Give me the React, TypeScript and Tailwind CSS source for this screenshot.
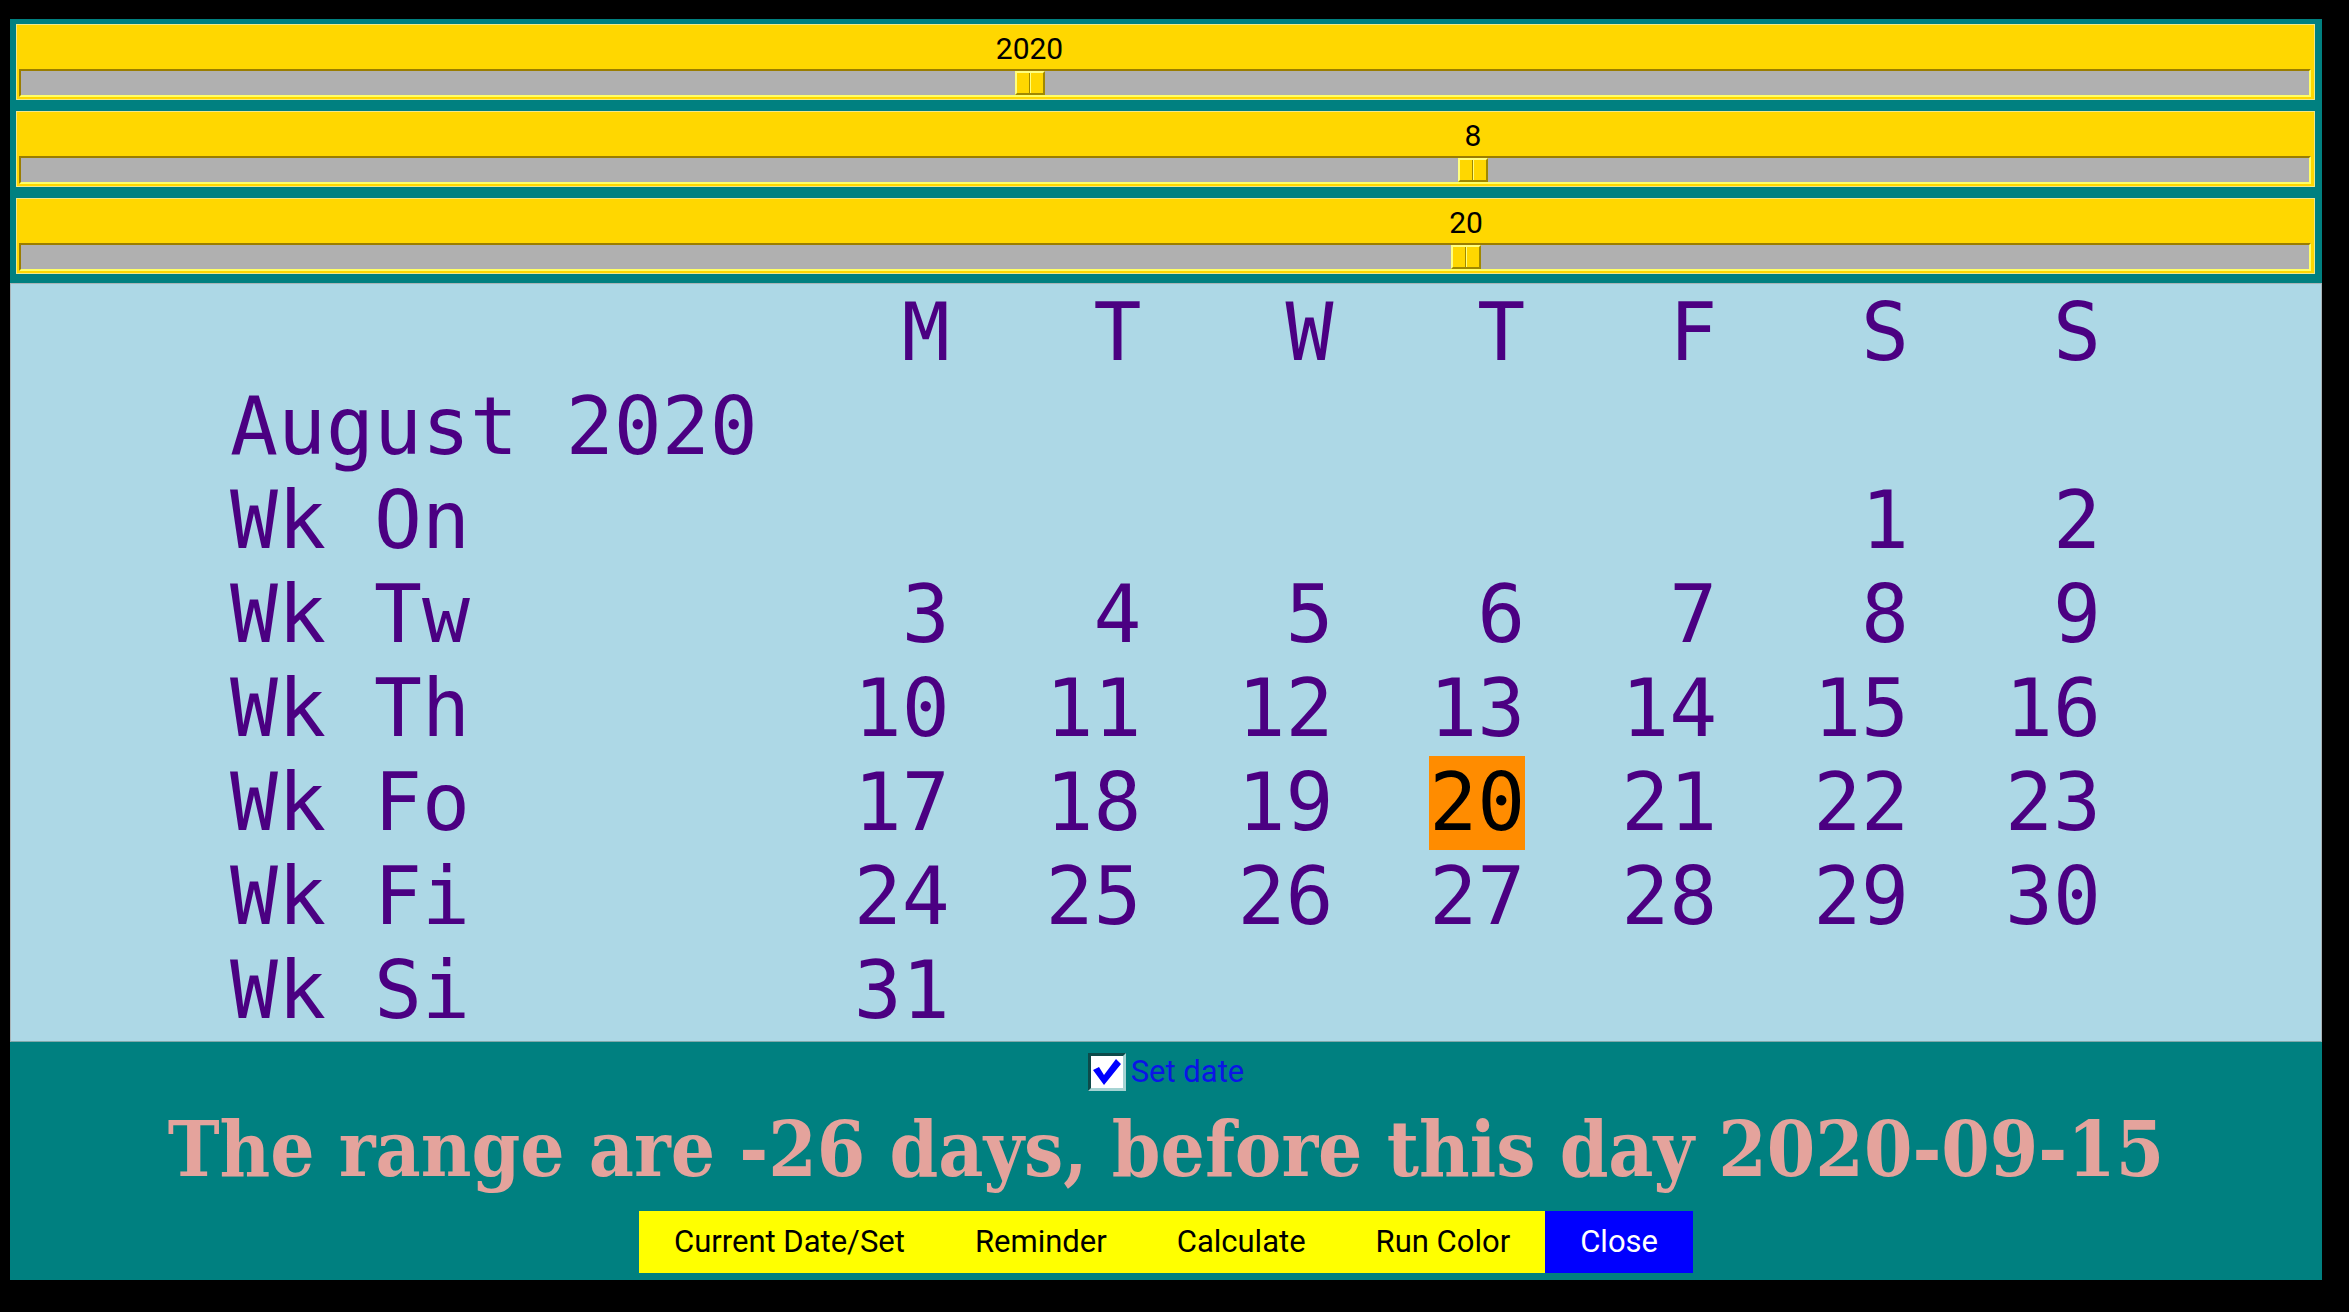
import React from 'react';

type SliderDef = { value: number; min: number; max: number };

const sliders: SliderDef[] = [
  { value: 2020, min: 1800, max: 2300 },
  { value: 8, min: 1, max: 12 },
  { value: 20, min: 1, max: 31 },
];

const days = ['M', 'T', 'W', 'T', 'F', 'S', 'S'];

const weeks: { label: string; cells: (number | null)[] }[] = [
  { label: 'Wk On', cells: [null, null, null, null, null, 1, 2] },
  { label: 'Wk Tw', cells: [3, 4, 5, 6, 7, 8, 9] },
  { label: 'Wk Th', cells: [10, 11, 12, 13, 14, 15, 16] },
  { label: 'Wk Fo', cells: [17, 18, 19, 20, 21, 22, 23] },
  { label: 'Wk Fi', cells: [24, 25, 26, 27, 28, 29, 30] },
  { label: 'Wk Si', cells: [31, null, null, null, null, null, null] },
];

const selectedDay = 20;

const Slider: React.FC<{ s: SliderDef }> = ({ s }) => {
  const f = (s.value - s.min) / (s.max - s.min);
  return (
    <div className="h-[76px] ml-[6px] mr-[7px] border border-[#f2e78a] bg-[#ffd700] flex flex-col">
      <div className="relative h-[44px] ml-[4px] mr-[5px]">
        <span
          className="absolute top-[6px] -translate-x-1/2 font-['Roboto',sans-serif] text-[30px] leading-[35px] text-black"
          style={{ left: `calc(${f} * (100% - 30px) + 15px)` }}
        >
          {s.value}
        </span>
      </div>
      <div className="relative h-[28px] ml-[2px] mr-[3px] border-2 border-t-[#9a7d00] border-l-[#9a7d00] border-b-[#ffff66] border-r-[#ffff66] bg-[#b0b0b0]">
        <div
          className="absolute top-0 w-[30px] h-[24px] flex border-2 border-t-[#ffff80] border-l-[#ffff80] border-b-[#a08800] border-r-[#a08800] bg-[#ffd700]"
          style={{ left: `calc(${f} * (100% - 30px))` }}
        >
          <div className="flex-1 border-r border-[#a08800]" />
          <div className="flex-1 border-l border-[#ffff80]" />
        </div>
      </div>
    </div>
  );
};

const App: React.FC = () => {
  return (
    <div className="w-[2349px] h-[1312px] bg-black pt-[19px] pl-[10px]">
      <div className="w-[2312px] flex flex-col">
        {/* sliders */}
        <div className="bg-[#008080] pt-[5px] pb-[9px] flex flex-col gap-[11px]">
          {sliders.map((s, i) => (
            <Slider key={i} s={s} />
          ))}
        </div>

        {/* calendar */}
        <div className="bg-[#add8e6] border border-[#a9b4b8] border-b-[#80a8aa] pt-[2px] pb-[3px] pl-[219px]">
          <div className="grid grid-cols-[11ch_repeat(7,4ch)] font-['DejaVu_Sans_Mono',monospace] text-[79.7px] leading-[94px] text-[#4b0082] whitespace-pre">
            <div />
            {days.map((d, i) => (
              <div key={i} className="text-right">{d}</div>
            ))}
            <div className="col-span-8">August 2020</div>
            {weeks.map((w) => (
              <React.Fragment key={w.label}>
                <div>{w.label}</div>
                {w.cells.map((c, i) => (
                  <div key={i} className="text-right">
                    {c === null ? '' : c === selectedDay ? (
                      <span className="inline-block bg-[#ff8c00] text-black">{c}</span>
                    ) : (
                      c
                    )}
                  </div>
                ))}
              </React.Fragment>
            ))}
          </div>
        </div>

        {/* result + actions */}
        <div className="bg-[#008080] h-[238px] flex flex-col items-center pt-[11px]">
          <label className="flex items-center gap-[5px] h-[38px]">
            <span className="w-[38px] h-[38px] border-[3px] border-t-[#0d4a4a] border-l-[#0d4a4a] border-b-[#a6d3d3] border-r-[#a6d3d3] bg-white flex items-center justify-center">
              <svg width="30" height="30" viewBox="0 0 30 30">
                <polygon points="1,13 7,10 12,18 24,2 29,7 12,28" fill="#0000ff" />
              </svg>
            </span>
            <span className="font-['Roboto',sans-serif] text-[31px] leading-[38px] text-[#0a14e6]">Set date</span>
          </label>
          <div className="mt-[7px] h-[102px] flex items-center font-['DejaVu_Serif',serif] font-bold font-stretch-condensed text-[77.5px] leading-[102px] text-[#e4a39c] whitespace-nowrap">
            The range are -26 days, before this day 2020-09-15
          </div>
          <div className="mt-[11px] flex font-['Roboto',sans-serif] text-[31px]">
            {['Current Date/Set', 'Reminder', 'Calculate', 'Run Color'].map((b) => (
              <button key={b} className="h-[62px] px-[35px] bg-[#ffff00] text-black">
                {b}
              </button>
            ))}
            <button className="h-[62px] px-[35px] bg-[#0000ff] text-white">Close</button>
          </div>
        </div>
      </div>
    </div>
  );
};

export default App;
